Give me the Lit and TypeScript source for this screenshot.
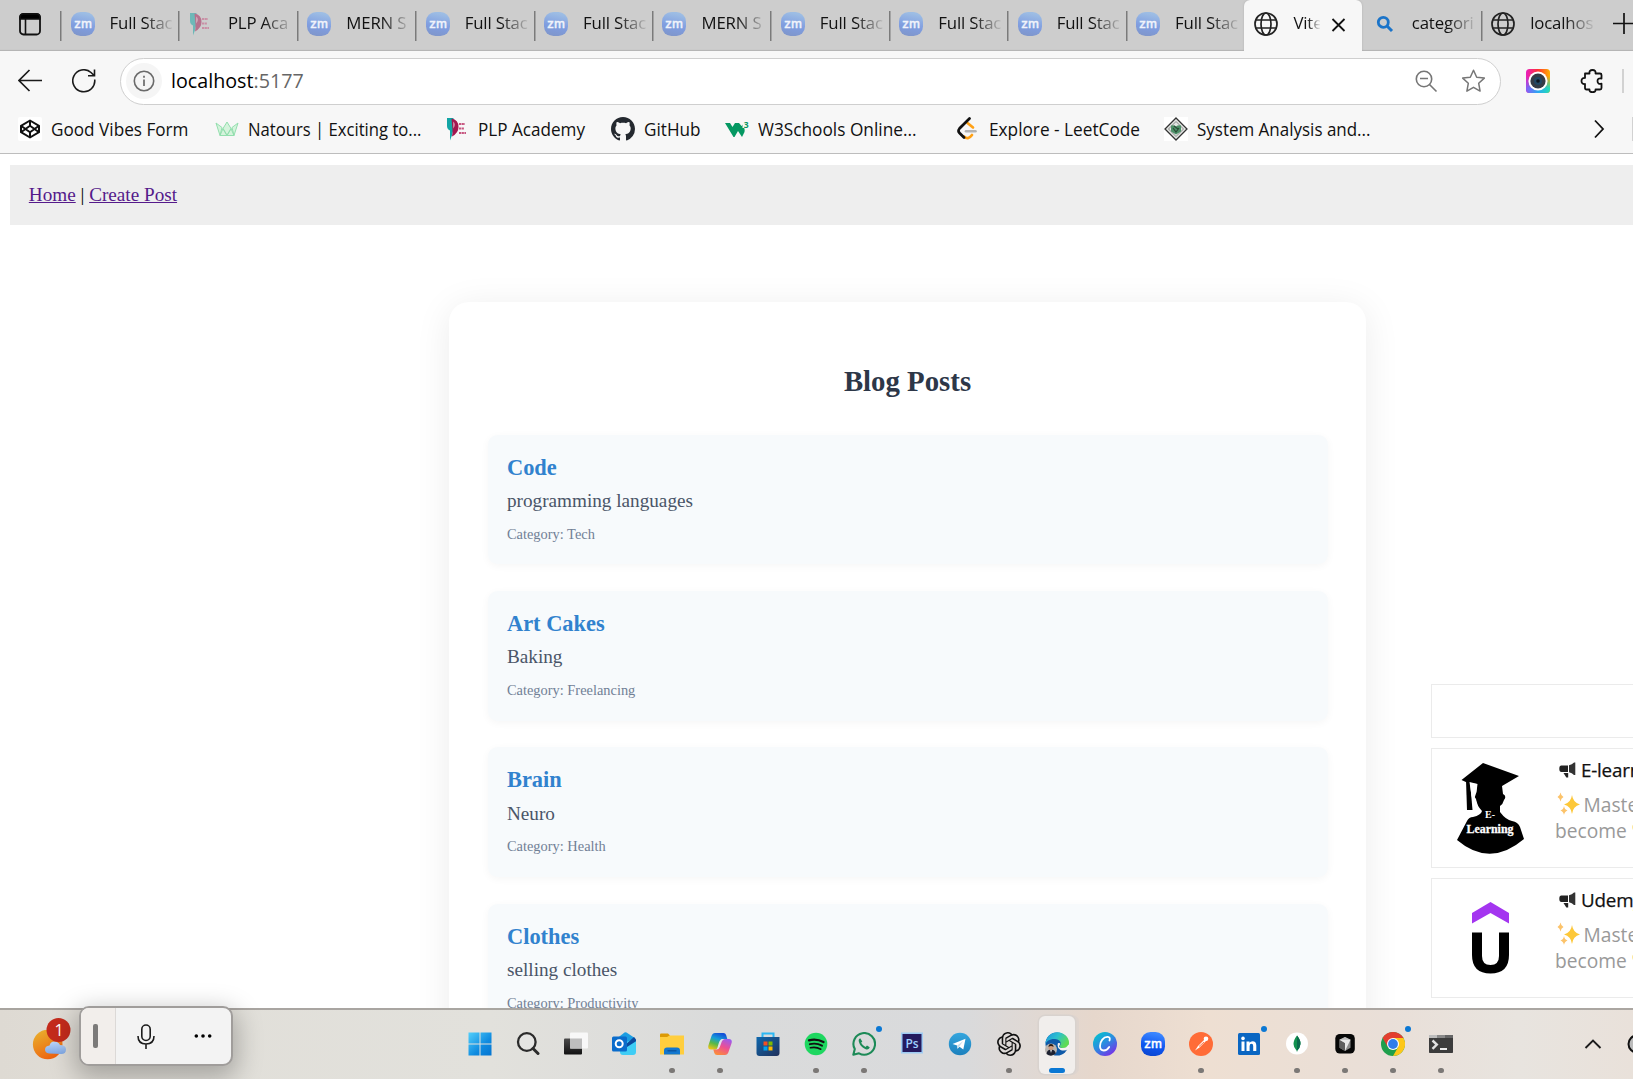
import { LitElement, html, css, svg, nothing } from "lit";
import { customElement } from "lit/decorators.js";

const zoomTile = (id: string, a: string, b: string, c: string, fg: string) => svg`
  <defs><linearGradient id=${id} x1=".3" y1="0" x2=".1" y2="1"><stop offset="0" stop-color=${a}/><stop offset=".55" stop-color=${b}/><stop offset="1" stop-color=${c}/></linearGradient></defs>
  <rect width="24" height="24" rx="9.5" fill="url(#${id})"/>
  <text x="12" y="15.800" text-anchor="middle" font-family="Inter, sans-serif" font-weight="500" font-size="12" textLength="18" lengthAdjust="spacingAndGlyphs" fill=${fg} stroke=${fg} stroke-width=".3">zm</text>`;

const plp = svg`
  <path d="M1 1h6.500v11q-1 6-3.500 11.500V13.500Q1 12 1 9z" fill="#12a5a5"/>
  <path d="M5.500 1.500q7 1 7 8.500 0 6-6.500 9.500.8-4 .5-7z" fill="#a3174f"/>
  <path d="M7.500 4.500q2 3 0 7z" fill="#f4f4f4"/>
  <path d="M13 7h6M13 11.500h5M13 16h7" stroke="#c7557f" stroke-width="1.900" stroke-dasharray="2.200 .5"/>`;

const globe = svg`<g fill="none" stroke="#222" stroke-width="1.700"><circle cx="12" cy="12" r="11"/><ellipse cx="12" cy="12" rx="5" ry="11"/><path d="M2 8h20M2 16h20"/></g>`;

const icons: Record<string, unknown> = {
  zmTab: zoomTile("zt", "#9dbde4", "#7f9de0", "#7f95c8", "#f0f3fb"),
  plp,
  plpTab: svg`<g opacity=".5">${plp}</g>`,
  globe,
  find: svg`<g fill="none" stroke="#1b74c9" stroke-width="2.800"><circle cx="10.300" cy="10.300" r="5"/><path d="M14 14l5 5" stroke-width="3"/></g>`,
  codepen: svg`<rect width="24" height="24" rx="2" fill="#fff"/><g fill="none" stroke="#111" stroke-width="2" stroke-linejoin="round"><path d="M12 3.500l9 5.300v6.400L12 20.500l-9-5.300V8.800z"/><path d="M12 3.500v5.300M12 15.200v5.300M3 8.800l9 6.400 9-6.400M3 15.200l9-6.400 9 6.400"/></g>`,
  natours: svg`<g fill="#d5f3dc" stroke="#93dfae" stroke-width="1"><path d="M1 6l6 4.500L5 18.500zM23 6l-6 4.500L19 18.500zM12 5l4 6.500-4 7-4-7zM5 18.500l3-7 4 7zM19 18.500l-3-7-4 7z"/></g>`,
  github: svg`<path transform="scale(1.5)" fill="#24292f" d="M8 0C3.580 0 0 3.580 0 8c0 3.540 2.290 6.530 5.470 7.590.4.070.55-.17.55-.38 0-.19-.01-.82-.01-1.490-2.010.37-2.530-.49-2.690-.94-.09-.23-.48-.94-.82-1.130-.28-.15-.68-.52-.01-.53.63-.01 1.080.58 1.230.82.72 1.210 1.870.87 2.330.66.07-.52.28-.87.51-1.070-1.780-.2-3.640-.89-3.640-3.950 0-.87.31-1.590.82-2.150-.08-.2-.36-1.020.08-2.120 0 0 .67-.21 2.200.82.64-.18 1.320-.27 2-.27s1.360.09 2 .27c1.530-1.040 2.200-.82 2.200-.82.44 1.100.16 1.920.08 2.120.51.56.82 1.270.82 2.150 0 3.070-1.870 3.750-3.650 3.950.29.25.54.73.54 1.480 0 1.070-.01 1.930-.01 2.200 0 .21.15.46.55.38A8.010 8.010 0 0016 8c0-4.420-3.580-8-8-8z"/>`,
  w3: svg`<path fill="#059862" d="M0 6h5l2.500 4L10 6h4l2.500 3 1.500-1.500h1V10q1 3 .5 5L17 20l-4-6-3.500 6h-1z"/><path d="M17.500 3h6v8h-6z" fill="#f7f7f7"/><text x="18.800" y="10.500" font-family="Open Sans, sans-serif" font-weight="700" font-size="8.500" fill="#059862">3</text>`,
  leet: svg`<g transform="translate(1.500 0)" fill="none" stroke-width="2.700" stroke-linecap="round"><path d="M10 6l5.500 4.500M14.500 18q-4 5.500-8 1.500" stroke="#ffa116"/><path d="M8.500 14.200h9.500" stroke="#b3b3b3" stroke-width="2.600"/><path d="M12 1.500L2 11.500q-2 2.500 0 4.500l4.500 4.500" stroke="#111"/></g>`,
  analysis: svg`<rect width="24" height="24" fill="#fff"/><path d="M12 1l11 11-11 11L1 12z" fill="#e3e6e3" stroke="#333" stroke-width="1.300"/><path d="M12 4.500l7.500 7.500-7.500 7.500L4.500 12z" fill="none" stroke="#888"/><path d="M7 8.500q3-1 5 1 2-2 5-1v6l-5 3-5-3z" fill="#4d9068"/><path d="M9 11l3 4 3-4M10 9l4 3" fill="none" stroke="#2b4a36" stroke-width="1.200"/>`,
  windows: svg`<defs><linearGradient id="wn" x1="0" y1="0" x2="1" y2="1"><stop offset="0" stop-color="#52cffb"/><stop offset=".6" stop-color="#0f8be0"/><stop offset="1" stop-color="#0574d0"/></linearGradient></defs><path fill="url(#wn)" d="M.5.5h11v11H.5zM12.500.5h11v11h-11zM.5 12.500h11v11H.5zM12.500 12.500h11v11h-11z"/>`,
  search: svg`<g fill="none" stroke="#2b2b2b" stroke-linecap="round"><circle cx="10.800" cy="10" r="8.800" fill="#e5e5e3" stroke-width="2.300"/><path d="M17 16.500l5 5" stroke-width="3"/></g>`,
  taskview: svg`<defs><linearGradient id="tv" x1="0" y1="0" x2="0" y2="1"><stop offset="0" stop-color="#4b4b4b"/><stop offset="1" stop-color="#111"/></linearGradient></defs><rect x="0" y="6.500" width="18" height="16" rx="1" fill="url(#tv)"/><rect x="6" y=".5" width="18" height="16" rx="1" fill="#f8f8f8"/><path d="M6 6.500h12v10H6z" fill="#bdbdbd"/>`,
  outlook: svg`<path d="M3 8l9.500-7.500Q13.500 0 14.500.6L22 5.500 24 8 15 15z" fill="#1b9de2"/><path d="M7 12l17-5v13q0 3-3 3H11q-3 0-3-3z" fill="#3fcdf5"/><path d="M12 14L22 5l2 2.500v1.800L15 15z" fill="#0c4a9e"/><rect x="0" y="4.500" width="15" height="15" rx="1.500" fill="#0a6ccc"/><circle cx="7.200" cy="11.800" r="3.500" fill="none" stroke="#fff" stroke-width="2"/>`,
  folder: svg`<path d="M0 2.500q0-1 1-1h7l2 2v4H0z" fill="#dc9a05"/><path d="M0 5h7l2.500-1.500H24v19H0z" fill="#ffce3e"/><path d="M4 22.500v-4q0-3 3-3h10q3 0 3 3v4z" fill="#1277cf"/><path d="M7.500 18.800h9" stroke="#0a4f99" stroke-width="1.200"/>`,
  copilot: svg`<defs><linearGradient id="ca" x1=".6" y1="0" x2=".2" y2="1"><stop offset="0" stop-color="#1550d8"/><stop offset=".35" stop-color="#159fd8"/><stop offset=".65" stop-color="#58b947"/><stop offset="1" stop-color="#f2c414"/></linearGradient><linearGradient id="cb" x1=".8" y1="0" x2=".3" y2="1"><stop offset="0" stop-color="#9a5bf0"/><stop offset=".5" stop-color="#ee4f92"/><stop offset="1" stop-color="#fb8c3c"/></linearGradient></defs>
  <path d="M7 1h8.500q2 0 2.600 2l1.200 4H15q-2 0-3 3l-2.300 6q-.7 1.500-2 1.500H3q-3.500 0-2.600-4L3.500 4Q4.500 1 7 1z" fill="url(#ca)"/><path d="M17 23H9q-2 0-2.700-2L5.300 17.500H8q2.500 0 3.500-3.500l1.700-5q.6-2 2.500-2H21q3.500 0 2.600 4l-3.100 9Q19.500 23 17 23z" fill="url(#cb)"/><path d="M10.500 12q1.300-5 4-5h2.300q-2 0-3 2.500l-2 5.500q-1 2.500-3.500 2.500 1.200-1 2.200-5.500z" fill="#e2e0ea"/>`,
  store: svg`<defs><linearGradient id="st" x1="0" y1="0" x2="1" y2="1"><stop offset="0" stop-color="#0e68ae"/><stop offset="1" stop-color="#21305a"/></linearGradient></defs><path d="M6.500 7V1.500h11V7" fill="none" stroke="#2bb8f3" stroke-width="2"/><path d="M.5 5h23v16q0 3-3 3h-17q-3 0-3-3z" fill="url(#st)"/><path d="M7.500 9.500h4v4h-4z" fill="#f25022"/><path d="M12.500 9.500h4v4h-4z" fill="#7fba00"/><path d="M7.500 14.500h4v4h-4z" fill="#00a4ef"/><path d="M12.500 14.500h4v4h-4z" fill="#ffb900"/>`,
  spotify: svg`<circle cx="12" cy="12" r="11.300" fill="#1ed760"/><g fill="none" stroke="#111" stroke-linecap="round"><path d="M5 8.300q7.500-2 14.500 1.700" stroke-width="2.300"/><path d="M5.800 12.200q6.500-1.700 12.200 1.500" stroke-width="1.900"/><path d="M6.400 15.800q5.500-1.400 10.400 1.400" stroke-width="1.600"/></g>`,
  whatsapp: svg`<path d="M1.300 22.700l1.500-5.600A10.800 10.800 0 1 1 7 21.300z" fill="none" stroke="#1c8a57" stroke-width="2.100" stroke-linejoin="round"/><path d="M8.200 6.300c-1 .3-1.800 1.600-1.400 3.200.8 3.700 4.200 7.100 7.700 7.900 1.600.3 3-.7 3.200-2.100l-2.700-1.700-1.500 1.400q-3-1.400-4.400-4.200l1.200-1.400z" fill="#1c8a57"/>`,
  photoshop: svg`<rect x="1" y=".5" width="22" height="21" fill="#9ecbf3"/><rect x="2.500" y="2" width="19" height="18" fill="#241a5e"/><text x="12" y="15.500" text-anchor="middle" font-family="Open Sans, sans-serif" font-size="12" font-weight="600" fill="#9fd0ff">Ps</text>`,
  telegram: svg`<defs><linearGradient id="tg" x1="0" y1="0" x2="0" y2="1"><stop offset="0" stop-color="#35a6de"/><stop offset="1" stop-color="#1b80bd"/></linearGradient></defs><circle cx="12" cy="12" r="11.200" fill="url(#tg)"/><path d="M4.500 12L17.500 6.800 15.300 17.500 11.500 14.800 9.500 16.700 9.200 13.500z" fill="#fff"/><path d="M9.200 13.500l6-4.500-4 5.500-1.700 2.200z" fill="#c8dcea"/>`,
  gpt: svg`<path fill="#111" d="M22.282 9.821a5.985 5.985 0 0 0-.516-4.910 6.046 6.046 0 0 0-6.510-2.900A6.065 6.065 0 0 0 4.981 4.182a5.985 5.985 0 0 0-3.998 2.900 6.046 6.046 0 0 0 .743 7.097 5.980 5.980 0 0 0 .51 4.911 6.051 6.051 0 0 0 6.515 2.900A5.985 5.985 0 0 0 13.260 24a6.056 6.056 0 0 0 5.772-4.206 5.990 5.990 0 0 0 3.998-2.900 6.056 6.056 0 0 0-.748-7.073zM13.260 22.430a4.476 4.476 0 0 1-2.877-1.041l.142-.08 4.778-2.758a.795.795 0 0 0 .393-.681v-6.737l2.020 1.169a.071.071 0 0 1 .038.052v5.583a4.504 4.504 0 0 1-4.494 4.493zM3.600 18.304a4.471 4.471 0 0 1-.535-3.014l.142.085 4.783 2.759a.771.771 0 0 0 .78 0l5.843-3.369v2.332a.080.080 0 0 1-.033.062L9.740 19.950a4.500 4.500 0 0 1-6.140-1.646zM2.341 7.896a4.485 4.485 0 0 1 2.365-1.973v5.677a.766.766 0 0 0 .388.677l5.815 3.354-2.020 1.169a.076.076 0 0 1-.071 0l-4.830-2.787A4.504 4.504 0 0 1 2.341 7.872zm16.596 3.856l-5.833-3.388L15.119 7.200a.076.076 0 0 1 .071 0l4.830 2.791a4.494 4.494 0 0 1-.676 8.105v-5.678a.79.790 0 0 0-.407-.667zm2.010-3.023l-.141-.085-4.774-2.782a.776.776 0 0 0-.785 0L9.409 9.230V6.897a.066.066 0 0 1 .028-.061l4.830-2.787a4.499 4.499 0 0 1 6.680 4.660zM8.306 12.863l-2.020-1.164a.080.080 0 0 1-.038-.057V6.075a4.499 4.499 0 0 1 7.375-3.453l-.142.080L8.704 5.460a.795.795 0 0 0-.393.681zm1.098-2.365l2.602-1.500 2.607 1.500v2.999l-2.597 1.500-2.607-1.500z"/>`,
  edge: svg`<defs><linearGradient id="eg" x1="0" y1="0" x2="1" y2=".5"><stop offset="0" stop-color="#1f8fdc"/><stop offset=".5" stop-color="#2bc0cf"/><stop offset="1" stop-color="#5fdc52"/></linearGradient></defs><circle cx="12" cy="12" r="11.500" fill="#0e59a8"/><path d="M.5 12C.5 5 6 .3 12.500.3S24 5.500 24 10.500q0 5.500-5.500 5.500-4 0-4-1.800 1.200-1 1.200-3C15.500 8 12 7 9 7 4.500 7 1.500 9.500.5 12z" fill="url(#eg)"/><path d="M13 11q-1.500 5 2.500 7 4 1.500 8-1l1-3-1-1.500q-2 3.500-5.500 3.500-4 0-4-1.800 1-1 1.200-3z" fill="#f4f2f1"/><circle cx="6" cy="17.500" r="6" fill="#b9b4b0"/><path d="M1.500 22q.5-4.500 4.500-4.500t4.800 4q-4.500 4-9.300.5z" fill="#1d2130"/><circle cx="6" cy="15.400" r="2.500" fill="#cf9c80"/><path d="M3.500 15q0-3 2.500-3t2.500 3q-2.500-2-5 0z" fill="#2a1c16"/><path d="M5.300 18h1.500L6 21z" fill="#fff"/>`,
  canva: svg`<defs><linearGradient id="cv" x1=".1" y1="0" x2=".8" y2="1"><stop offset="0" stop-color="#01c8cc"/><stop offset=".5" stop-color="#2c8be0"/><stop offset="1" stop-color="#7d2ae8"/></linearGradient></defs><circle cx="12" cy="12" r="12" fill="url(#cv)"/><path d="M16.500 8.500q1.200-3.500-1.800-3.700C10.500 4.500 7 9.500 7 14q0 4.500 3.800 4.500 3.200 0 5.400-3.500" fill="none" stroke="#fff" stroke-width="1.800" stroke-linecap="round"/>`,
  zoom: zoomTile("zb", "#3b86ff", "#0d55f0", "#0a44cc", "#ffffff"),
  postman: svg`<circle cx="12" cy="12" r="12" fill="#ff6c37"/><path d="M6 18.500l3-4.500 7.500-7.500 1.500 1.500-7.500 7.500z" fill="#fff"/><circle cx="17" cy="6.700" r="2.300" fill="#fff"/><path d="M10 14.500l5-4.500" stroke="#ff6c37" stroke-width=".9"/>`,
  linkedin: svg`<rect x="1" y="1" width="22" height="22" rx="1.500" fill="#0a66c2"/><path d="M4.500 9.500h3v9.500h-3zM9.500 9.500h3v1.300q1-1.600 3-1.600 3.800 0 3.800 4.300V19h-3.100v-4.900q0-2.300-1.700-2.300-1.900 0-1.900 2.400V19H9.500z" fill="#fff"/><circle cx="6" cy="6.400" r="1.800" fill="#fff"/>`,
  mongo: svg`<circle cx="12" cy="11.500" r="11" fill="#fff"/><path d="M12 3.500q4 5 3.500 8.500-.5 4-3.200 6.500L12 20l-.5-1.500Q8.500 15.500 8.500 12q0-4 3.500-8.500z" fill="#12924f"/><path d="M12 3.500q4 5 3.500 8.500-.5 4-3.200 6.500L12 20z" fill="#0b6a4c"/>`,
  cursor: svg`<rect x="2.300" y="2" width="19.500" height="19.500" rx="4.500" fill="#070707"/><path d="M12 5l5.500 2.700v8L12 19l-5.500-3.300v-8z" fill="#8b8b8b"/><path d="M6.500 7.700L12 5l5.500 2.700L12 11z" fill="#bdbdbd"/><path d="M6.500 7.700L12 11v8l-5.500-3.300z" fill="#5e5e5e"/><path d="M6.500 7.700h11L12 19v-8z" fill="#e8e8e8"/>`,
  chrome: svg`<circle cx="12" cy="12" r="12" fill="#1f9f4c"/><path d="M22.400 6A12 12 0 0 1 12 24L17.200 15 12 6z" fill="#fdc719"/><path d="M1.600 6l5.200 9L12 6h10.400A12 12 0 0 0 1.600 6z" fill="#e33e2f"/><circle cx="12" cy="12" r="6" fill="#fff"/><circle cx="12" cy="12" r="4.900" fill="#2f7de9"/>`,
  terminal: svg`<rect x="0" y="3" width="24" height="18" rx=".8" fill="#3c3c3c"/><path d="M0 3h8v3H0z" fill="#bdbdbd"/><path d="M8 3h8v3H8z" fill="#8a8a8a"/><path d="M16 3h8v3h-8z" fill="#666"/><path d="M3.500 8.500l4.300 4-4.300 4.300" fill="none" stroke="#e2e2e2" stroke-width="2.400"/><path d="M11 17h7" stroke="#fff" stroke-width="1.800"/>`,
};

const icon = (name: string) => html`<svg class="ic" viewBox="0 0 24 24" width="24" height="24">${icons[name]}</svg>`;

interface Tab { icon: string; label: string; active?: boolean; bare?: boolean }
const TABS: Tab[] = [
  { icon: "zmTab", label: "Full Stac" }, { icon: "plpTab", label: "PLP Aca" },
  { icon: "zmTab", label: "MERN S" }, { icon: "zmTab", label: "Full Stac" },
  { icon: "zmTab", label: "Full Stac" }, { icon: "zmTab", label: "MERN S" },
  { icon: "zmTab", label: "Full Stac" }, { icon: "zmTab", label: "Full Stac" },
  { icon: "zmTab", label: "Full Stac" }, { icon: "zmTab", label: "Full Stac" },
  { icon: "globe", label: "Vite", active: true },
  { icon: "find", label: "categori", bare: true }, { icon: "globe", label: "localhos" },
];

const BOOKMARKS = [
  { icon: "codepen", label: "Good Vibes Form", slot: 197, text: 137.5 },
  { icon: "natours", label: "Natours | Exciting to...", slot: 230.5, text: 173.5 },
  { icon: "plp", label: "PLP Academy", slot: 165.5, text: 107 },
  { icon: "github", label: "GitHub", slot: 114, text: 56.5 },
  { icon: "w3", label: "W3Schools Online...", slot: 231, text: 158.5 },
  { icon: "leet", label: "Explore - LeetCode", slot: 208, text: 151 },
  { icon: "analysis", label: "System Analysis and...", slot: 220, text: 173.5 },
];

const POSTS = [
  { title: "Code", body: "programming languages", category: "Tech" },
  { title: "Art Cakes", body: "Baking", category: "Freelancing" },
  { title: "Brain", body: "Neuro", category: "Health" },
  { title: "Clothes", body: "selling clothes", category: "Productivity" },
];

interface App { name: string; dot?: boolean; badge?: boolean; active?: boolean }
const APPS: App[] = [
  { name: "windows" }, { name: "search" }, { name: "taskview" }, { name: "outlook" },
  { name: "folder", dot: true }, { name: "copilot", dot: true }, { name: "store" },
  { name: "spotify", dot: true }, { name: "whatsapp", dot: true, badge: true },
  { name: "photoshop" }, { name: "telegram" }, { name: "gpt", dot: true },
  { name: "edge", active: true }, { name: "canva" }, { name: "zoom" },
  { name: "postman", dot: true }, { name: "linkedin", badge: true },
  { name: "mongo", dot: true }, { name: "cursor", dot: true },
  { name: "chrome", dot: true, badge: true }, { name: "terminal", dot: true },
];

const uiFont = css`"Open Sans", "Noto Sans", sans-serif`;

@customElement("browser-chrome")
class BrowserChrome extends LitElement {
  static styles = css`
    :host { display: block; font-family: ${uiFont}; color: #111; flex: none; }
    * { box-sizing: border-box; }
    svg { display: block; flex: none; }
    .tabs { height: 51px; background: #cdcdcd; display: flex; align-items: stretch; box-shadow: inset 0 -2px 1px -1px #b3b3b3; overflow: hidden; }
    .lead { width: 60px; padding: 13px 0 0 19px; flex: none; }
    .tab { width: 118.400px; flex: none; display: flex; align-items: flex-start; padding: 12px 5px 0 10.500px; background: linear-gradient(#7b7b7b, #7b7b7b) 0 11px / 1.500px 30px no-repeat; }
    .tab.active { background: #f7f7f7; border-radius: 6px 6px 0 0; box-shadow: 0 0 2px #aaa; }
    .tab.bare { background: none; }
    .label { margin-left: 15px; width: 64px; height: 24px; overflow: hidden; white-space: nowrap; font-size: 16.800px; line-height: 22px; letter-spacing: -.15px; -webkit-mask-image: linear-gradient(90deg, #000 55%, transparent 103%); mask-image: linear-gradient(90deg, #000 55%, transparent 103%); }
    .active .label { width: 27px; }
    .close { margin: 6px 0 0 11px; }
    .plus { margin: 12px 0 0 13px; }
    .bar { height: 60px; background: #f7f7f7; display: flex; align-items: center; padding-left: 18px; overflow: hidden; }
    .reload { margin-left: 30px; }
    .address { margin-left: 24px; width: 1381px; height: 47px; flex: none; border: 1.500px solid #cfcfcf; border-radius: 24px; background: #fff; display: flex; align-items: center; padding: 0 14.500px 0 5px; }
    .info { width: 36px; height: 36px; border-radius: 50%; background: #f5f5f5; display: grid; place-items: center; }
    .url { flex: 1; margin-left: 9px; font-size: 19.700px; line-height: 26px; color: #666; }
    .url b { font-weight: 400; color: #000; }
    .star { margin-left: 23px; }
    .camera { margin-left: 25px; }
    .puzzle { margin-left: 30px; }
    .rule { width: 2px; height: 24px; background: #d2d2d2; flex: none; margin-left: 18px; }
    .marks { height: 43px; background: #f7f7f7; border-bottom: 1px solid #bdbdbd; display: flex; align-items: center; padding: 0 0 7px 18px; overflow: hidden; }
    .mark { display: flex; align-items: center; gap: 8.500px; flex: none; }
    .more { margin-left: auto; margin-right: 27px; }
    .marks .rule { margin: 0; width: 1.500px; }
  `;
  render() {
    return html`
      <div class="tabs">
        <div class="lead"><svg width="22" height="23" viewBox="0 0 22 23"><rect x="1" y="1" width="20" height="20.500" rx="3.500" fill="none" stroke="#111" stroke-width="1.800"/><path d="M1 6V4q0-3 3-3h14q3 0 3 3v2zM6.500 6v15" fill="#000" stroke="#111" stroke-width="1.600"/></svg></div>
        ${TABS.map((t) => html`<div class="tab ${t.active ? "active" : ""} ${t.bare ? "bare" : ""}">${icon(t.icon)}<span class="label">${t.label}</span>
          ${t.active ? html`<svg class="close" width="15" height="14" viewBox="0 0 15 14"><path d="M1.500 1l12 12M13.500 1l-12 12" stroke="#111" stroke-width="1.800"/></svg>` : nothing}</div>`)}
        <svg class="plus" width="24" height="24" viewBox="0 0 24 24"><path d="M12 1v21M1 11.500h22" stroke="#111" stroke-width="1.700"/></svg>
      </div>
      <div class="bar">
        <svg width="24" height="24" viewBox="0 0 24 24"><path d="M24 11.500H1M11.500 1L1 11.500 11.500 22" fill="none" stroke="#1a1a1a" stroke-width="1.700"/></svg>
        <svg class="reload" width="24" height="24" viewBox="0 0 24 24"><path d="M22.700 10.500A11 11 0 1 1 19 3.500l3 2.800M22.500.5v6.300h-6.500" fill="none" stroke="#1a1a1a" stroke-width="1.600"/></svg>
        <div class="address">
          <span class="info"><svg width="22" height="22" viewBox="0 0 22 22"><circle cx="11" cy="11" r="9.700" fill="none" stroke="#6a6a6a" stroke-width="1.600"/><path d="M11 9.500V16M11 5.800v2" stroke="#6a6a6a" stroke-width="1.700"/></svg></span>
          <span class="url"><b>localhost</b>:5177</span>
          <svg width="23" height="23" viewBox="0 0 23 23"><g fill="none" stroke="#767676" stroke-width="1.600"><circle cx="9" cy="9" r="7.700"/><path d="M5 8.500h8M14.500 14.500l7 7"/></g></svg>
          <svg class="star" width="25" height="24" viewBox="0 0 24 24"><path d="M12 1.200l3.200 7 7.600.9-5.600 5.200 1.400 7.800L12 18.300l-6.600 3.800 1.400-7.800L1.200 9.100l7.600-.9z" fill="none" stroke="#767676" stroke-width="1.500" stroke-linejoin="round"/></svg>
        </div>
        <svg class="camera" width="24" height="24" viewBox="0 0 24 24"><defs><linearGradient id="cm" x1="0" y1="0" x2="1" y2="0"><stop offset="0" stop-color="#e91ec0"/><stop offset=".5" stop-color="#ff3232"/><stop offset="1" stop-color="#ffb300"/></linearGradient><linearGradient id="cn" x1="0" y1="0" x2="1" y2="0"><stop offset="0" stop-color="#8b5cf6"/><stop offset=".5" stop-color="#2aa8f2"/><stop offset="1" stop-color="#24dfb5"/></linearGradient><linearGradient id="fade" x1="0" y1="0" x2="0" y2="1"><stop offset=".3" stop-color="#000"/><stop offset=".8" stop-color="#fff"/></linearGradient><mask id="mk"><rect width="24" height="24" fill="url(#fade)"/></mask></defs><rect width="24" height="24" rx="3.500" fill="url(#cm)"/><rect width="24" height="24" rx="3.500" fill="url(#cn)" mask="url(#mk)"/><circle cx="12" cy="12" r="9.600" fill="#fff"/><circle cx="12" cy="12" r="7.600" fill="#343c46"/><circle cx="12" cy="12" r="4" fill="#214763"/><circle cx="12" cy="12" r="1.800" fill="#0d151e"/></svg>
        <svg class="puzzle" width="24" height="24" viewBox="0 0 24 24"><path d="M5 4.500h4.500q-.5-3.500 3-3.500t3 3.500H20q1.500 0 1.500 1.500v3.500q-4-.7-4 2.600t4 2.600V19q0 1.500-1.500 1.500h-4.500q.3 2.700-3 2.700t-3-2.700H6.500Q5 20.500 5 19v-4q-3.500.3-3.500-3T5 9z" fill="none" stroke="#111" stroke-width="1.800" stroke-linejoin="round"/></svg>
        <span class="rule"></span>
      </div>
      <div class="marks">
        ${BOOKMARKS.map((b) => html`<div class="mark" style="width:${b.slot}px">${icon(b.icon)}<svg width=${b.text + 4} height="28"><text x="0" y="20.500" font-size="17.400" fill="#111" textLength=${b.text} lengthAdjust="spacingAndGlyphs">${b.label}</text></svg></div>`)}
        <svg class="more" width="12" height="20" viewBox="0 0 12 20"><path d="M2 1.500l8 8.500-8 8.500" fill="none" stroke="#111" stroke-width="1.800"/></svg><span class="rule"></span>
      </div>`;
  }
}

@customElement("blog-page")
class BlogPage extends LitElement {
  static styles = css`
    :host { display: flex; flex-direction: column; flex: 1; min-height: 0; overflow: hidden; background: #fff; font-family: "Liberation Serif", serif; font-size: 19.200px; }
    * { box-sizing: border-box; margin: 0; }
    nav { margin: 11px 0 0 10px; height: 60px; flex: none; background: #eee; padding: 19px 18.800px; line-height: 22px; }
    a { color: #551a8b; text-decoration: underline; }
    .area { display: flex; align-items: flex-start; padding-left: 449px; gap: 65px; }
    .card { margin-top: 77px; width: 917px; flex: none; border-radius: 20px; background: #fff; box-shadow: 0 5px 36px rgba(0,0,0,.08); padding: 63.300px 38px 60px 39px; }
    h2 { font-size: 28.800px; line-height: 32px; text-align: center; color: #2d3748; margin: 0 1px 37.500px 0; }
    .post { height: 129.500px; margin-bottom: 26.800px; border-radius: 9.600px; background: #f7fafc; box-shadow: 0 2px 8px rgba(0,0,0,.04); padding: 20px 19px; }
    h3 { font-size: 22.400px; line-height: 26px; color: #3182ce; }
    .body { margin-top: 9.300px; line-height: 22px; color: #4a5568; }
    .cat { margin-top: 13.700px; font-size: 14.400px; line-height: 16px; color: #718096; }
    .ads { margin-top: 459px; flex: 1; min-width: 0; display: flex; flex-direction: column; gap: 10.500px; font-family: ${uiFont}; overflow: hidden; }
    .ad { width: 340px; border: 1px solid #ebebeb; border-right: 0; height: 119.500px; display: flex; padding: 10px 0 0 24px; }
    .blank { height: 53.500px; }
    .pic { flex: none; width: 68px; margin-right: 31px; }
    svg { display: block; flex: none; }
    .txt { white-space: nowrap; margin-top: -2px; }
    .head { display: flex; align-items: center; gap: 5px; padding-left: 4px; height: 26px; font-size: 18.800px; color: #111; -webkit-text-stroke: .25px #111; letter-spacing: -.2px; }
    .line { display: flex; align-items: center; gap: 4px; height: 26px; font-size: 19.200px; color: #999; }
    .first { margin-top: 8px; padding-left: 1.500px; }
  `;
  private ad(title: string, pic: unknown) {
    return html`<div class="ad"><div class="pic">${pic}</div><div class="txt">
      <div class="head"><svg width="17" height="16" viewBox="0 0 17 16"><path d="M2.500 3.500H9v6.500H2.500Q.3 10 .3 6.700t2.200-3.200z" fill="#222"/><path d="M10 3.200Q13 2.800 15 .5h1.300v12.500H15q-2-2-5-2.700z" fill="#333"/><path d="M4.500 11h4.700v4.500H7.300z" fill="#222"/></svg><span>${title}</span></div>
      <div class="line first"><svg width="23" height="24" viewBox="0 0 23 24"><path d="M15 3q1 7.500 8 9.500-7 1.500-8 9.500-1-8-8-9.500 7-2 8-9.500z" fill="#fdc83a"/><path d="M3.500.5q.5 3.500 3 4.500-2.500 1-3 4.500Q3 6 .5 5 3 4 3.500.5zM7 14q.5 3.500 3.500 4.500Q7.500 19.500 7 23q-.5-3.500-3.500-4.500Q6.500 17.500 7 14z" fill="#fcc36a"/></svg><span>Master skills</span></div>
      <div class="line"><span>become</span><svg width="20" height="20" viewBox="0 0 20 20"><path d="M10 18L2 10q-2-6 3-7 3 0 5 3 2-3 5-3 5 1 3 7z" fill="#fcd34d"/></svg></div></div></div>`;
  }
  render() {
    return html`
      <nav><a>Home</a> | <a>Create Post</a></nav>
      <div class="area">
        <section class="card"><h2>Blog Posts</h2>
          ${POSTS.map((p) => html`<article class="post"><h3>${p.title}</h3><p class="body">${p.body}</p><p class="cat">Category: ${p.category}</p></article>`)}
        </section>
        <aside class="ads">
          <div class="ad blank"></div>
          ${this.ad("E-learning", html`<svg width="68" height="96" viewBox="0 0 68 96"><path d="M5.500 21L27 4l36 13-17 10 1 8q4 2 1 6-1 4-4 6v6q6 8 12 9 6 1 8 6l4 12Q34 109 1 81l10-19q2-4 6-4 8-2 9-6-5-5-6-12-4-5 0-6l1-9-9-1z" fill="#000"/><path d="M10 21l1 30h5.500l-2.500-29z" fill="#000"/><path d="M13.500 23l8 2-1 8-2 6 2 4q1 6 4 9-7-6-9-15z" fill="#fff"/><text x="34" y="59" text-anchor="middle" font-family="Liberation Serif, serif" font-weight="700" font-size="10" fill="#fff">E-</text><text x="34" y="74" text-anchor="middle" font-family="Liberation Serif, serif" font-weight="700" font-size="12" textLength="47" lengthAdjust="spacingAndGlyphs" fill="#fff" stroke="#fff" stroke-width=".3">Learning</text></svg>`)}
          ${this.ad("Udemy", html`<svg width="68" height="96" viewBox="0 0 68 96"><path d="M16 24L34.500 13 53 24v10.500L34.500 24 16 34.500z" fill="#a435f0"/><path d="M16 43.500h10V67q0 9 8.500 9T43 67V43.500h10V66q0 18.500-18.500 18.500T16 66z" fill="#000"/></svg>`)}
        </aside>
      </div>`;
  }
}

@customElement("task-bar")
class TaskBar extends LitElement {
  static styles = css`
    :host { display: flex; position: relative; box-sizing: border-box; height: 71px; flex: none; border-top: 2px solid rgba(150,146,142,.75); background: linear-gradient(90deg, #dedad3 0, #e1dfd9 12%, #e2e1dc 30%, #dadbdb 44%, #d9dadc 59%, #e6d7cc 67%, #eedfd2 74%, #e9dfd8 85%, #e8e4df 93%, #e9e1da 100%); padding-left: 456px; }
    * { box-sizing: border-box; }
    svg { display: block; flex: none; }
    .app { width: 48.050px; flex: none; padding: 6px 6px 4px; display: flex; justify-content: center; }
    .cell { position: relative; width: 36px; height: 58px; padding: 16px 6px 0; border-radius: 6px; }
    .on .cell { background: #f1eeec; box-shadow: 0 0 0 1.500px #d8d2ce, 3px 0 0 1px #ded4ce; }
    .cell i { position: absolute; left: 15px; bottom: 1px; width: 6px; height: 5px; border-radius: 3px; background: #7b7876; }
    .on .cell i { left: 10px; width: 16px; background: #0b78d4; }
    .cell b { position: absolute; right: 0; top: 10px; width: 6px; height: 6px; border-radius: 50%; background: #0b78d4; }
    .weather { position: absolute; left: 32px; top: 6px; }
    .voice { position: absolute; left: 79px; top: -4px; width: 154px; height: 60px; border: 2px solid #a09d9b; border-radius: 10px; background: #f3f3f3; box-shadow: 0 8px 26px 4px rgba(0,0,0,.26); display: flex; overflow: hidden; }
    .grip { width: 35px; background: #f2eeeb; border-right: 1.500px solid #dcd9d7; padding: 16px 0 0 12px; }
    .grip span { display: block; width: 5px; height: 24px; border-radius: 2px; background: #7c7a79; }
    .mic { margin: 16px 0 0 21px; }
    .dots { margin: 25px 0 0 38.500px; }
    .tray { margin-left: auto; display: flex; align-items: center; padding-bottom: 1px; }
    .cut { margin-left: 25px; width: 6px; overflow: hidden; }
  `;
  render() {
    return html`
      ${APPS.map((a) => html`<div class="app ${a.active ? "on" : ""}"><div class="cell">${icon(a.name)}${a.dot || a.active ? html`<i></i>` : nothing}${a.badge ? html`<b></b>` : nothing}</div></div>`)}
      <div class="tray"><svg width="18" height="12" viewBox="0 0 18 12"><path d="M1.500 10L9 2.500l7.500 7.500" fill="none" stroke="#1c1c1c" stroke-width="1.900"/></svg><div class="cut"><svg width="20" height="20" viewBox="0 0 20 20"><circle cx="10" cy="10" r="8.500" fill="#bbb" stroke="#111" stroke-width="2"/></svg></div></div>
      <svg class="weather" width="40" height="46" viewBox="0 0 40 46"><defs><linearGradient id="sun" x1="0" y1="0" x2=".5" y2="1"><stop offset="0" stop-color="#e9b62f"/><stop offset="1" stop-color="#ed6611"/></linearGradient><linearGradient id="cl" x1="0" y1="0" x2="0" y2="1"><stop offset="0" stop-color="#bcd6fa"/><stop offset="1" stop-color="#7fa8e6"/></linearGradient></defs><circle cx="15.700" cy="28.500" r="14.800" fill="url(#sun)"/><path d="M17 37.500q-4-.5-4-4t4.500-4q1-4 5-4t5.500 3.500q6 0 6 4.500t-5 4.500z" fill="url(#cl)"/><circle cx="26.500" cy="14" r="12" fill="#c42b1c"/><text x="27" y="19.500" text-anchor="middle" font-family="Open Sans, sans-serif" font-size="16" fill="#fff">1</text></svg>
      <div class="voice"><div class="grip"><span></span></div>
        <svg class="mic" width="18" height="26" viewBox="0 0 18 26"><g fill="none" stroke="#1c1c1c" stroke-width="1.600"><rect x="4.800" y="1" width="8.400" height="15.500" rx="4.200"/><path d="M1 12q0 8 8 8t8-8M9 20v5"/></g></svg>
        <svg class="dots" width="18" height="6" viewBox="0 0 18 6"><circle cx="2.300" cy="3" r="1.800"/><circle cx="9" cy="3" r="1.800"/><circle cx="15.700" cy="3" r="1.800"/></svg>
      </div>`;
  }
}

@customElement("app-root")
class AppRoot extends LitElement {
  static styles = css`:host { display: flex; flex-direction: column; width: 1633px; height: 1079px; overflow: hidden; }`;
  render() {
    return html`<browser-chrome></browser-chrome><blog-page></blog-page><task-bar></task-bar>`;
  }
}
